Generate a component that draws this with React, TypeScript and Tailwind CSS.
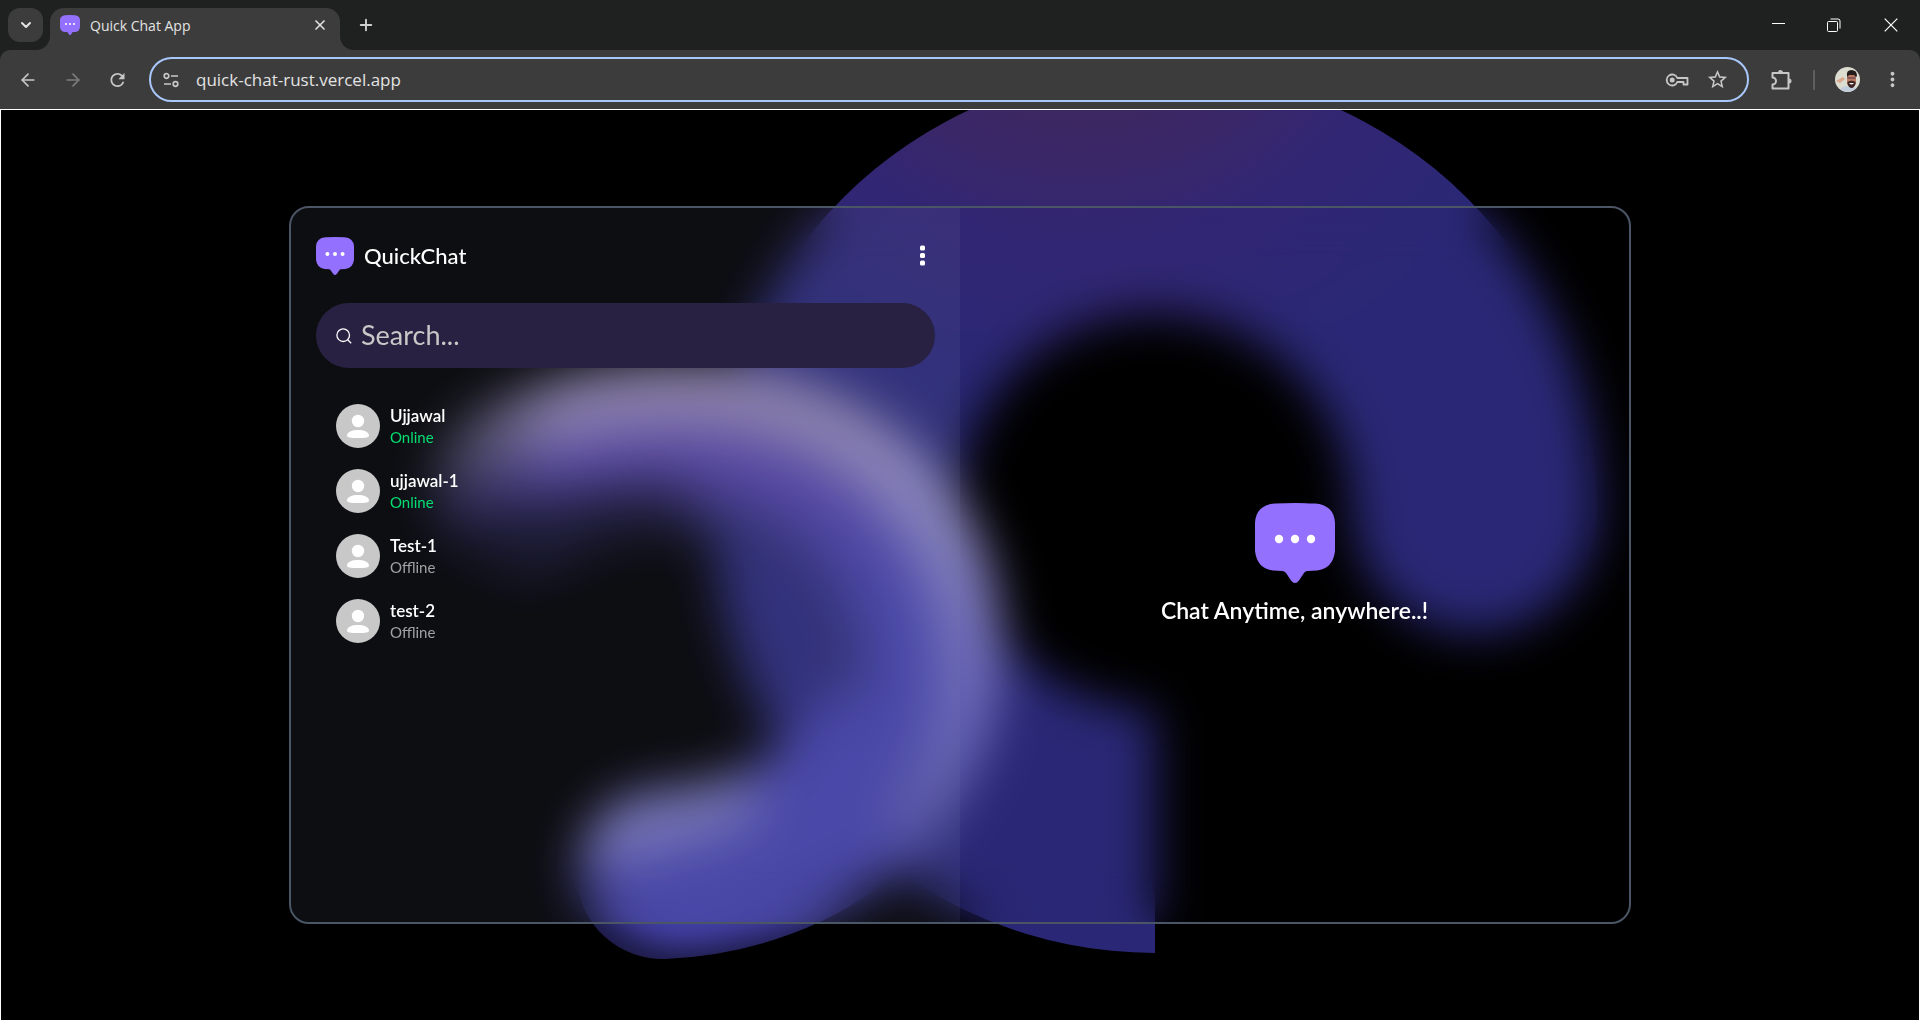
import type { ReactNode } from "react";
import { ChevronDown, X, Plus, ArrowLeft, ArrowRight } from "lucide-react";
import { MdStarOutline, MdRefresh, MdMoreVert } from "react-icons/md";

type Contact = { name: string; online: boolean };

const contacts: Contact[] = [
  { name: "Ujjawal", online: true },
  { name: "ujjawal-1", online: true },
  { name: "Test-1", online: false },
  { name: "test-2", online: false },
];

function Bubble({ className }: { className: string }) {
  return (
    <svg viewBox="0 0 80 80" className={className} aria-hidden="true">
      <path
        d="M20 .6Q40-.6 60 .6Q79 2 80 20Q80.600 34 80 48Q78 65.500 62 67.500L52.500 68Q50 68.300 48.800 70.300L44 77.500Q40 82.500 36 77.500L31.200 70.300Q30 68.300 27.500 68L18 67.500Q2 65.500 0 48Q-.6 34 0 20Q1 2 20 .6Z"
        fill="#9470ff"
      />
      <circle cx="24" cy="36" r="4.200" fill="#fff" />
      <circle cx="40" cy="36" r="4.200" fill="#fff" />
      <circle cx="56" cy="36" r="4.200" fill="#fff" />
    </svg>
  );
}

function IconButton({ label, className = "", children }: { label: string; className?: string; children: ReactNode }) {
  return (
    <button type="button" aria-label={label} className={`flex shrink-0 items-center justify-center ${className}`}>
      {children}
    </button>
  );
}

function TabStrip() {
  return (
    <div className="flex h-[50px] items-start bg-[#1f2120] pl-2 text-[#e3e3e3]">
      <IconButton label="Search tabs" className="mt-2 h-[34px] w-[35px] rounded-xl bg-[#3c3c3c]">
        <ChevronDown size={16} strokeWidth={3} />
      </IconButton>
      <div className="relative mt-2 ml-[7px] flex h-[42px] w-[290px] items-center rounded-t-[14px] bg-[#3c3c3c] pr-3 pb-2 pl-[10px]">
        <svg viewBox="0 0 14 14" className="absolute bottom-0 -left-[14px] size-[14px]" aria-hidden="true">
          <path d="M14 0v14H0A14 14 0 0 0 14 0Z" fill="#3c3c3c" />
        </svg>
        <svg viewBox="0 0 14 14" className="absolute -right-[14px] bottom-0 size-[14px]" aria-hidden="true">
          <path d="M0 0v14h14A14 14 0 0 1 0 0Z" fill="#3c3c3c" />
        </svg>
        <Bubble className="size-5" />
        <span className="ml-[10px] flex-1 text-[14px]">Quick Chat App</span>
        <IconButton label="Close tab" className="size-4">
          <X size={16} strokeWidth={2.5} />
        </IconButton>
      </div>
      <IconButton label="New tab" className="mt-4 ml-[17px] size-[18px] text-[#d0d0d0]">
        <Plus size={18} strokeWidth={2.5} />
      </IconButton>
      <div className="ml-auto flex h-[50px] items-center text-white">
        <IconButton label="Minimize" className="h-full w-[56px]">
          <span className="mb-[3px] h-px w-[13px] bg-white" />
        </IconButton>
        <IconButton label="Restore" className="h-full w-[56px]">
          <svg viewBox="0 0 14 14" className="size-[14px]" fill="none" stroke="currentColor" aria-hidden="true">
            <rect x=".5" y="3.500" width="10" height="10" rx="1" />
            <path d="M3.500 1H11a2 2 0 0 1 2 2v7.500" />
          </svg>
        </IconButton>
        <IconButton label="Close window" className="h-full w-[58px]">
          <svg viewBox="0 0 14 14" className="size-[14px]" stroke="currentColor" strokeWidth="1.200" aria-hidden="true">
            <path d="M.7.7l12.600 12.600M13.300.7L.7 13.300" />
          </svg>
        </IconButton>
      </div>
    </div>
  );
}

function ProfilePhoto() {
  return (
    <svg viewBox="0 0 25 25" className="size-[25px] rounded-full" aria-hidden="true">
      <rect width="25" height="25" fill="#dcdcd0" />
      <path d="M1 14l7-4 2 2-5 4z" fill="#dba78d" />
      <path d="M4 25q2-6 8-6h4q6 1 7 6z" fill="#c3cedd" />
      <rect x="12" y="7" width="9" height="12" rx="4" fill="#b9795f" />
      <path d="M12 9q-1-6 4.500-6T22 9l-1 1-2-2h-5l-1.500 2z" fill="#241d1c" />
      <path d="M12.500 15q4-2.500 8 0v2q-1.500 4-4 4t-4-4z" fill="#3a2320" />
      <path d="M14 16h5q-2.500 3-5 0z" fill="#f6efea" />
      <path d="M12.500 11h8" stroke="#4a3658" strokeWidth="1.200" />
    </svg>
  );
}

function Toolbar() {
  return (
    <div className="bg-[#1f2120]">
      <div className="flex h-[59px] items-center rounded-t-[10px] bg-[#3c3c3c] pr-4 pl-[18px] text-[#c7c7c7]">
        <IconButton label="Back" className="size-5">
          <ArrowLeft size={20} />
        </IconButton>
        <IconButton label="Forward" className="ml-[25px] size-5 text-[#7d7d7d]">
          <ArrowRight size={20} />
        </IconButton>
        <IconButton label="Reload" className="ml-6 size-[21px]">
          <MdRefresh size={22} />
        </IconButton>
        <div className="ml-[21px] flex h-[45px] flex-1 items-center rounded-full border-2 border-[#a8c7fa] pr-[18px] pl-3">
          <IconButton label="View site information" className="size-4">
            <svg viewBox="0 0 16 16" className="size-4" fill="none" stroke="currentColor" strokeWidth="1.700" aria-hidden="true">
              <circle cx="3.500" cy="4" r="2.300" />
              <circle cx="12.500" cy="12" r="2.300" />
              <path d="M8 4h7M1 12h7" />
            </svg>
          </IconButton>
          <input
            aria-label="Address"
            defaultValue="quick-chat-rust.vercel.app"
            className="ml-[17px] min-w-0 flex-1 bg-transparent text-[17px] text-[#e3e3e3] outline-none"
          />
          <IconButton label="Manage passwords" className="size-6">
            <svg viewBox="0 0 24 16" className="h-4 w-6" fill="none" stroke="currentColor" strokeWidth="1.800" aria-hidden="true">
              <path d="M12.300 6H22.500V12.500H18.500V10H16.500V10H12.300A5.500 5.500 0 1 1 12.300 6Z" strokeLinejoin="round" />
              <circle cx="7.200" cy="8" r="1.600" fill="currentColor" />
            </svg>
          </IconButton>
          <IconButton label="Bookmark this tab" className="ml-4 size-6">
            <MdStarOutline size={23} />
          </IconButton>
        </div>
        <IconButton label="Extensions" className="ml-5 size-6">
          <svg viewBox="0 0 24 24" className="size-6" fill="none" stroke="currentColor" strokeWidth="2" aria-hidden="true">
            <path d="M3.500 5H19.500V20.500H3.500V16.500A3.500 3.500 0 0 0 3.500 9.500Z" strokeLinejoin="round" />
            <path d="M9 4.500a2.500 2.500 0 0 1 5 0ZM20 10.500a2.500 2.500 0 0 1 0 5Z" fill="currentColor" stroke="none" />
          </svg>
        </IconButton>
        <span className="ml-5 h-5 w-[2px] bg-[#5e5e5e]" />
        <IconButton label="Profile" className="ml-5 size-[25px]">
          <ProfilePhoto />
        </IconButton>
        <IconButton label="Browser menu" className="ml-5 size-6">
          <MdMoreVert size={23} />
        </IconButton>
      </div>
    </div>
  );
}

const band = "M662 874C805 868 917 775 917 650C917 530 820 449 690 449C630 449 570 459 516 488";

function Artwork() {
  return (
    <svg
      viewBox="1 110 1918 910"
      preserveAspectRatio="xMidYMid slice"
      className="absolute inset-0 size-full"
      fill="none"
      aria-hidden="true"
    >
      <defs>
        <radialGradient id="arch" gradientUnits="userSpaceOnUse" cx="1080" cy="-100" r="500">
          <stop offset=".4" stopColor="#3e2860" />
          <stop offset=".54" stopColor="#392769" />
          <stop offset=".68" stopColor="#322673" />
          <stop offset="1" stopColor="#2a2876" />
        </radialGradient>
        <linearGradient id="bandFill" gradientUnits="userSpaceOnUse" x1="0" y1="430" x2="0" y2="600">
          <stop offset="0" stopColor="#553f9f" />
          <stop offset="1" stopColor="#4441a7" />
        </linearGradient>
        <linearGradient id="rim" gradientUnits="userSpaceOnUse" x1="0" y1="380" x2="0" y2="860">
          <stop offset="0" stopColor="#8f82a8" />
          <stop offset=".25" stopColor="#8d88c0" />
          <stop offset=".55" stopColor="#7672bc" />
          <stop offset=".75" stopColor="#6664b4" />
          <stop offset="1" stopColor="#5552a0" />
        </linearGradient>
        <linearGradient id="fade" gradientUnits="userSpaceOnUse" x1="425" y1="0" x2="560" y2="0">
          <stop offset="0" stopColor="#000" stopOpacity=".75" />
          <stop offset="1" stopColor="#000" stopOpacity="0" />
        </linearGradient>
        <mask id="bandMask" maskUnits="userSpaceOnUse" x="300" y="300" width="800" height="700">
          <path d={band} stroke="#fff" strokeWidth="170" strokeLinecap="round" />
        </mask>
        <filter id="soft" filterUnits="userSpaceOnUse" x="200" y="200" width="1000" height="900" colorInterpolationFilters="sRGB">
          <feGaussianBlur stdDeviation="15" />
        </filter>
      </defs>
      <path
        d="M1155 953A442 442 0 1 1 1597 511A122 122 0 0 1 1353 511A198 198 0 1 0 1155 709Z"
        fill="url(#arch)"
      />
      <g mask="url(#bandMask)">
        <rect x="400" y="300" width="700" height="700" fill="url(#bandFill)" />
        <g filter="url(#soft)">
          <path
            d="M400 465C520 392 600 380 690 382C870 384 984 510 986 660C987 730 960 790 915 850"
            stroke="url(#rim)"
            strokeWidth="94"
          />
          <path d="M575 842C640 818 700 815 750 785" stroke="#7c79b8" strokeWidth="60" />
          <path d="M400 590C520 535 600 512 690 522" stroke="#0f0e22" strokeWidth="66" />
          <path d="M690 522C770 530 832 590 836 690" stroke="#28265f" strokeWidth="52" />
          <path d="M530 880C565 975 640 1002 700 996C780 988 850 965 925 915" stroke="#1b1942" strokeWidth="100" />
        </g>
        <rect x="400" y="330" width="170" height="280" fill="url(#fade)" />
      </g>
    </svg>
  );
}

function ContactRow({ name, online }: Contact) {
  return (
    <li>
      <button type="button" className="flex h-[65px] w-full items-center gap-[10px] rounded pl-5 text-left">
        <svg viewBox="0 0 44 44" className="size-11" aria-hidden="true">
          <circle cx="22" cy="22" r="22" fill="#c8c8c8" />
          <circle cx="22" cy="17" r="6.200" fill="#fff" />
          <path d="M11 31.500C11 28 16 26 22 26S33 28 33 31.500C33 33.500 30 34 22 34S11 33.500 11 31.500Z" fill="#fff" />
        </svg>
        <span className="flex flex-col">
          <span className="text-[17px] leading-[23px] font-semibold text-white">{name}</span>
          <span className={online ? "text-[15px] leading-5 text-[#05df72]" : "text-[15px] leading-5 text-[#a1a1a1]"}>
            {online ? "Online" : "Offline"}
          </span>
        </span>
      </button>
    </li>
  );
}

function Sidebar() {
  return (
    <section className="bg-[#8185b2]/10 p-[25px] text-white">
      <header className="flex h-[45px] items-center">
        <Bubble className="size-[38px]" />
        <h1 className="ml-[10px] flex-1 text-[22px] font-medium">QuickChat</h1>
        <IconButton label="Menu" className="size-[25px]">
          <svg viewBox="0 0 25 25" className="size-[25px]" fill="#fff" aria-hidden="true">
            <rect x="10" y="2.500" width="5" height="5" rx="1.500" />
            <rect x="10" y="10" width="5" height="5" rx="1.500" />
            <rect x="10" y="17.500" width="5" height="5" rx="1.500" />
          </svg>
        </IconButton>
      </header>
      <div className="mt-[25px] flex h-[65px] items-center gap-[9px] rounded-full bg-[#282142] px-5">
        <svg viewBox="0 0 16 16" className="size-4" fill="none" stroke="#fff" strokeWidth="1.300" aria-hidden="true">
          <circle cx="7.200" cy="7.200" r="6.300" />
          <path d="M11.700 11.700l3.500 3.500" />
        </svg>
        <input
          type="text"
          aria-label="Search contacts"
          placeholder="Search..."
          className="min-w-0 flex-1 bg-transparent text-[27px] outline-none placeholder:text-[#c8c8c8]"
        />
      </div>
      <ul className="mt-[25px]">
        {contacts.map((c) => (
          <ContactRow key={c.name} name={c.name} online={c.online} />
        ))}
      </ul>
    </section>
  );
}

export default function App() {
  return (
    <div className="flex h-screen flex-col overflow-hidden bg-black font-['Open_Sans',sans-serif]">
      <TabStrip />
      <Toolbar />
      <main className="relative flex-1 border-x border-t border-white bg-black px-[15%] py-[5%] font-[Lato,sans-serif]">
        <Artwork />
        <div className="relative grid h-full grid-cols-2 overflow-hidden rounded-[20px] border-2 border-[#4a5565] backdrop-blur-xl">
          <Sidebar />
          <section className="flex flex-col items-center justify-center gap-[10px] text-white">
            <Bubble className="size-20" />
            <p className="text-[23px] leading-[35px] font-semibold">Chat Anytime, anywhere..!</p>
          </section>
        </div>
      </main>
    </div>
  );
}
